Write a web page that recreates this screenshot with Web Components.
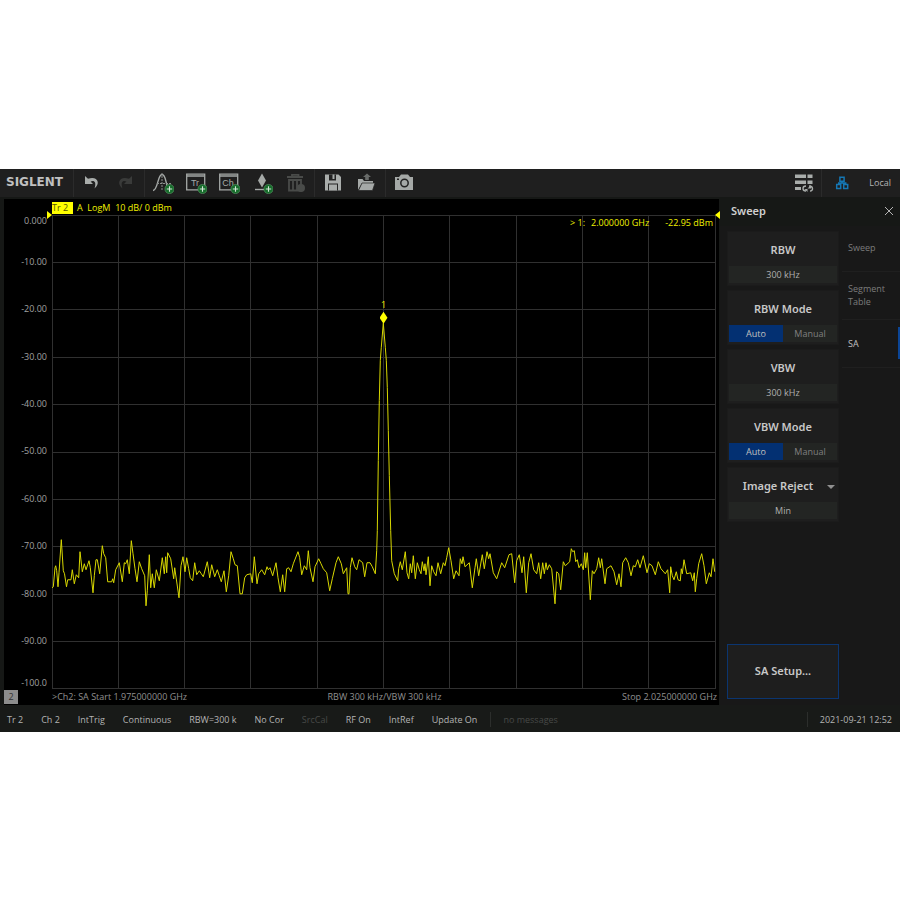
<!DOCTYPE html>
<html lang="en">
<head>
<meta charset="utf-8">
<meta name="viewport" content="width=device-width, initial-scale=1">
<title>Siglent spectrum analyzer</title>
<style>
  body { margin: 0; min-height: 100vh; display: grid; align-items: center; background: #fff; font: 9px/12px "Open Sans", "Noto Sans", sans-serif; color: #b4b4b4; }
</style>
</head>
<body>
<analyzer-app></analyzer-app>
<script>
const BASE = `<style>
  *, *::before, *::after { box-sizing: border-box; }
  button, input, select { font: inherit; color: inherit; margin: 0; border: 0; padding: 0; background: none; border-radius: 0; min-width: 0; }
  button { cursor: pointer; }
</style>`;

function define(name, html, setup) {
  const tpl = document.createElement('template');
  tpl.innerHTML = BASE + html;
  customElements.define(name, class extends HTMLElement {
    connectedCallback() {
      if (this.shadowRoot) return;
      const root = this.attachShadow({ mode: 'open' });
      root.append(tpl.content.cloneNode(true));
      if (setup) setup(this, root);
    }
  });
}

const PLUS = '<circle cx="17.5" cy="17" r="4.6" fill="#176d2c" stroke="#5c9a68" stroke-width=".6"/><path d="M17.5 14.3v5.4M14.8 17h5.4" stroke="#d5e6d8" stroke-width="1.1"/>';
const ICONS = {
  undo: '<path d="M4 4v8h8L9.6 9.6C13 8 15.800 10 13.500 16.500 20 11.500 16.500 3.500 7 6.800z" fill="#a9adab"/>',
  redo: '<path d="M18 4v8h-8l2.400-2.400C9 8 6.200 10 8.500 16.500 2 11.500 5.500 3.500 15 6.800z" fill="#3a3b3a"/>',
  trace: '<path d="M1 18.500C6 18.500 5.500 2.500 10 2.500S13.500 14 17 18" fill="none" stroke="#a5a9a7" stroke-width="1.400"/><path d="M10 1v18M5 11.500h14" stroke="#8c908e" stroke-dasharray="2 1"/>' + PLUS,
  tr: '<path d="M1.700 2.200h18v15.600h-18z" fill="none" stroke="#a5a9a7" stroke-width="1.300"/><path d="M2 4h17" stroke="#a5a9a7" stroke-width="1.500"/><text x="10" y="14" font-size="9" text-anchor="middle" fill="#a5a9a7" font-family="Liberation Sans, sans-serif">Tr</text>' + PLUS,
  ch: '<path d="M1.700 2.200h18v15.600h-18z" fill="none" stroke="#a5a9a7" stroke-width="1.300"/><path d="M2 4h17" stroke="#a5a9a7" stroke-width="1.500"/><text x="10" y="14" font-size="9" text-anchor="middle" fill="#a5a9a7" font-family="Liberation Sans, sans-serif">Ch</text>' + PLUS,
  marker: '<path d="M11 1.500l4 7-4 7-4-7z" fill="#a5a9a7"/><path d="M4 17.500h11" stroke="#a5a9a7" stroke-width="1.400"/>' + PLUS,
  trash: '<path d="M3 5h16M8 5V2.800h6.500V5M5 8h12v10.500H5zM9 8v10M13 8v10" fill="none" stroke="#494b49" stroke-width="1.800"/><circle cx="17" cy="16" r="4" fill="#494b49"/>',
  save: '<path d="M3 2.500h13.500L19 5v13.500H3z" fill="#a9adab"/><path d="M7 2.500h7v6H7z" fill="#222"/><path d="M10.500 2.500h2V7h-2z" fill="#a9adab"/><path d="M6 11.500h10v7H6z" fill="#242524"/><path d="M7 12.500h8v6H7z" fill="#a9adab"/>',
  open: '<path d="M3 18V7h4.500l1.500 2h9v2H7z" fill="#a5a9a7"/><path d="M7 11h13l-2.500 7.500H3.500z" fill="#a5a9a7" stroke="#222" stroke-width=".7"/><path d="M12 1.500l4 3.500h-2.200v3h-3.600V5H8z" fill="#686b69"/>',
  camera: '<path d="M2 5h4l2-2.500h7L17 5h3v13H2z" fill="#a5a9a7"/><circle cx="11.500" cy="11" r="3.700" fill="none" stroke="#222" stroke-width="1.500"/><path d="M4 6.500h2V8H4z" fill="#222"/>',
  layout: '<path d="M1 2.500h11V6H1zM13.500 2.500h5V6h-5zM1 8.500h11V12H1zM13.500 8.500h5V12h-5zM1 15h6v3H1z" fill="#a9adab"/><path d="M12 14c-4 0-4 5 0 5M15 14c4.500 0 4.500 5 1 5" fill="none" stroke="#a9adab" stroke-width="1.400"/><path d="M10.500 17h3v3zM17 13v3.500h-3.500z" fill="#a9adab"/>',
  network: '<path d="M8.900 5.200h4.200v4H8.900zM5.700 12.500h4v4h-4zM12.700 12.500h4v4h-4zM11 9v2M7.700 12.500V11h7v1.500" fill="none" stroke="#1577b4" stroke-width="1.500"/>',
  close: '<path d="M7 7l8 8M15 7l-8 8" stroke="#b4b4b4" stroke-width="1"/>'
};

define('icon-button', `<style>
  :host { display: flex; width: 33px; }
  button { flex: 1; display: grid; place-items: center; }
  svg { width: 22px; height: 22px; display: block; }
</style><button type="button"><svg viewBox="0 0 22 22" aria-hidden="true"></svg></button>`,
(el, root) => {
  root.querySelector('svg').innerHTML = ICONS[el.getAttribute('icon')];
  const b = root.querySelector('button');
  b.setAttribute('aria-label', el.getAttribute('label'));
  b.disabled = el.hasAttribute('disabled');
});

define('tool-group', `<style>
  :host { display: flex; padding: 0 3px 0 1px; border-left: 1px solid #2b2b2b; }
</style><slot></slot>`);

define('tool-bar', `<style>
  :host { display: flex; background: #1f1f1f; }
  .logo { width: 73px; padding-left: 6px; font: bold 12px/27px "DejaVu Sans", sans-serif; color: #c0c0c0; }
  .space { flex: 1; }
  .net { display: flex; align-items: center; border-left: 1px solid #2b2b2b; padding: 0 9px 0 3px; gap: 11px; }
</style>
<div class="logo">SIGLENT</div>
<tool-group><icon-button icon="undo" label="Undo"></icon-button><icon-button icon="redo" label="Redo" disabled></icon-button></tool-group>
<tool-group><icon-button icon="trace" label="Add math trace"></icon-button><icon-button icon="tr" label="Add trace"></icon-button><icon-button icon="ch" label="Add channel"></icon-button><icon-button icon="marker" label="Add marker"></icon-button><icon-button icon="trash" label="Delete" disabled></icon-button></tool-group>
<tool-group><icon-button icon="save" label="Save"></icon-button><icon-button icon="open" label="Open"></icon-button></tool-group>
<tool-group><icon-button icon="camera" label="Screenshot"></icon-button></tool-group>
<span class="space"></span>
<icon-button icon="layout" label="Layout"></icon-button>
<div class="net"><icon-button icon="network" label="Network"></icon-button><span>Local</span></div>`);

define('trace-screen', `<style>
  :host { display: grid; grid-template-rows: 16px 1fr 16px; background: #000; min-width: 0; }
  .head { padding: 2px 0 0 48px; display: flex; align-items: center; gap: 4px; color: #f0f000; white-space: pre; }
  .tag { background: #ff0; color: #555500; width: 21px; line-height: 12px; }
  .mid { display: grid; grid-template-columns: 48px 1fr; padding-right: 4px; }
  .axis { display: grid; grid-template-rows: 1fr repeat(9, 2fr) 1fr; justify-items: end; align-items: center; padding-right: 5px; color: #a0a0a0; }
  .axis :first-child { align-self: start; }
  .axis :last-child { align-self: end; }
  .plot { position: relative; }
  svg.graph { display: block; width: 100%; height: 100%; position: absolute; overflow: visible; }
  path { fill: none; stroke-width: 1; vector-effect: non-scaling-stroke; }
  .grid { stroke: #303030; shape-rendering: crispEdges; }
  .trace { stroke: #d8d800; }
  .ref { position: absolute; top: -4px; border: 4px solid transparent; }
  .ref.l { right: 100%; border-left: 5px solid #ff0; border-right: 0; }
  .ref.r { left: 100%; border-right: 5px solid #ff0; border-left: 0; }
  .readout { position: absolute; top: 2px; right: 2px; color: #f0f000; display: flex; gap: 16px; }
  .readout span:first-child { margin-right: -10px; }
  .mark { position: absolute; left: 50%; top: 21.800%; transform: translate(-50%, -50%); width: 8px; height: 12px; background: #ff0; clip-path: polygon(50% 0, 100% 50%, 50% 100%, 0 50%); }
  .num { position: absolute; left: 50%; top: 19%; transform: translate(-50%, -50%); color: #f0f000; }
  .foot { display: grid; grid-template-columns: 48px 1fr auto 1fr; align-items: center; padding-right: 2px; color: #909090; }
  .foot :last-child { text-align: right; }
  .badge { width: 14px; height: 14px; line-height: 14px; text-align: center; background: #8c8c8c; color: #333; }
</style>
<div class="head"><span class="tag">Tr 2</span><span>A  LogM  10 dB/ 0 dBm</span></div>
<div class="mid">
  <div class="axis"><span>0.000</span><span>-10.00</span><span>-20.00</span><span>-30.00</span><span>-40.00</span><span>-50.00</span><span>-60.00</span><span>-70.00</span><span>-80.00</span><span>-90.00</span><span>-100.0</span></div>
  <div class="plot">
    <svg class="graph" viewBox="52 215 663 473" preserveAspectRatio="none" role="img" aria-label="Spectrum trace"><path class="grid"/><path class="trace"/></svg>
    <i class="ref l"></i><i class="ref r"></i>
    <div class="readout"><span>&gt; 1:</span><span>2.000000 GHz</span><span>-22.95 dBm</span></div>
    <span class="num">1</span><i class="mark"></i>
  </div>
</div>
<div class="foot"><span class="badge">2</span><span>&gt;Ch2: SA Start 1.975000000 GHz</span><span>RBW 300 kHz/VBW 300 kHz</span><span>Stop 2.025000000 GHz</span></div>`,
(el, root) => {
  let g = '';
  for (let i = 0; i <= 10; i++) g += `M${52 + i * 66.3} 215v473M52 ${215 + i * 47.3}h663`;
  root.querySelector('.grid').setAttribute('d', g);
  root.querySelector('.trace').setAttribute('d', 'M' + TRACE.trim());
});

const TRACE = `
52,587 53.3,586 55,567 55.7,565 56.7,570 58,586 59,572 61.3,539 63.3,570 64.5,573 66.5,586 67.7,579 71,579 72.3,569 74.3,583 76.3,574 78.7,577 80,551 82.3,571 84.3,563 86,569 89,560 90.3,567 93,592 94.3,575 96,559 97.3,559 99.7,573 102.3,545 103.7,553 105.7,557 107.7,581 111.7,581 112.7,578 113.7,582 115.7,569 119.3,562 122.3,581 124.3,562 125.7,563 127.3,559 129.3,573 131.3,540 133,553 135,568 137,581 139.3,561 141.7,568 144.7,575 146,605 147.3,590 149.3,554 150.7,587 152.3,573 154.3,587 156.3,569 159.3,580 162.3,557 164.3,573 165.7,556 166.7,572 167.7,552 170.7,558 173.7,578 174.7,567 179,597 181,565 183,556 185,571 186.7,557 188.7,568 190.3,577 192.7,580 194.7,562 196.7,574 199.3,570 201.3,573 203.3,576 207.3,561 209.7,577 211.7,564 214.7,576 217.3,569 219.3,575 221.3,581 224,570 226.3,591 228.7,575 231,551 233.3,558 235,564 237.3,565 240,593 242.3,593 244.7,577 246.7,574 250.7,573 252.3,582 254.3,556 257,583 258.7,573 261.7,569 264.7,574 267,566 268.3,569 270,567 272.7,575 276,562 278,577 280.3,591 282.7,574 284.7,591 286.7,568 288.7,567 291,571 293.3,563 298,551 299.7,557 301.7,574 304.3,565 306.7,569 308.3,550 310,567 313,581 315,566 318.7,558 321,563 323.3,568 326.7,572 329.7,590 332.3,578 336,562 338.3,556 341.3,563 343.3,573 346.7,567 348,593 349,593 350.3,567 352,557 354.7,566 356.7,569 359,559 362.7,562 364.7,576 367,562 370,562 372.3,566 375.3,573 376.7,550 377.3,530 378.3,460 379.3,400 380.3,360 381.3,347 383.3,323 385.3,347 386.3,360 387.3,387 388.3,430 389.3,475 390.7,530 391.7,560 394.3,573 397.7,580 398.7,568 400.3,561 402.3,569 405.3,551 407,572 408.7,578 410.3,563 411.7,572 413.3,555 415.3,578 417.3,562 419.3,569 421,573 422.3,561 424,570 425,563 426,574 428.3,556 430,585 431.7,565 433.7,571 436,575 438,562 440.7,573 443.3,562 445,565 446.7,557 448.7,547 451,560 453.7,578 456,570 459,575 460.3,558 462,563 463,556 465,566 469.3,562 472.3,587 475,567 476.3,558 478.7,575 482.3,554 484.3,568 487,551 488.7,558 490,553 493.3,572 496.7,578 501.7,562 504.7,567 509,554 511.7,553 514.7,582 516.7,560 519.3,554 522,572 523.7,556 526.3,592 528.7,562 531,553 533.7,569 536.7,573 538.7,562 540.7,578 542.7,562 544.3,573 546,562 547.3,569 549.3,564 551.7,568 555,603 556.7,571 558.7,573 560.7,589 563.3,561 565.3,565 569.7,561 571.3,548 572.7,551 574.3,550 575.7,561 577.3,559 579,567 581.3,563 583.3,569 584.7,552 585.7,567 587.3,552 590.3,599 592.3,570 594,573 596.7,568 598.7,557 600.3,567 601.7,558 605,583 606.7,568 611,565 614,571 616.7,584 619,573 621,586 622.7,562 625.7,557 628.3,562 631,575 633.3,565 635.3,566 637.7,559 640,567 643.3,555 647,572 649.3,563 652,565 655.3,574 658.3,561 661,568 665.3,573 667.7,569 669.7,592 670.7,566 672.3,575 674,579 676.3,571 678,579 680.3,580 681.3,568 682.3,573 684,559 686.7,573 690.7,572 692.7,580 694.3,572 695.3,591 696.7,578 698.7,563 701.7,553 704,565 706.3,583 709.3,572 711,576 713,558 714.7,571`;

const CARD = `
  :host { display: grid; grid-template-rows: 1fr 17px; height: 55px; padding: 1px 1px 2px; background: #1e1e1e; border: 1px solid #1b1b1b; }
  .title { position: relative; display: grid; place-items: center; padding-top: 1px; font: 600 11px/16px "Noto Sans", sans-serif; color: #c8c8c8; }
  .value { width: 100%; background: #232523; text-align: center; color: #b0b0b0; padding-top: 2px; }`;

define('value-card', `<style>${CARD}</style><label class="title" for="v"></label><input class="value" id="v" type="text">`,
(el, root) => {
  root.querySelector('label').textContent = el.getAttribute('label');
  root.querySelector('input').value = el.getAttribute('value');
});

define('mode-card', `<style>${CARD}
  .seg { display: grid; grid-template-columns: 1fr 1fr; background: #232523; }
  .seg label { display: grid; place-items: center; padding-top: 2px; color: #808080; cursor: pointer; }
  .seg label:has(:checked) { background: #033072; color: #c0c0c0; }
  .seg input { appearance: none; position: absolute; }
</style><span class="title" id="t"></span>
<div class="seg" role="radiogroup" aria-labelledby="t"><label><input type="radio" name="m" checked><span>Auto</span></label><label><input type="radio" name="m"><span>Manual</span></label></div>`,
(el, root) => { root.querySelector('.title').textContent = el.getAttribute('label'); });

define('select-card', `<style>${CARD}
  .title { padding-right: 10px; }
  .title::after { content: ""; position: absolute; right: 2px; top: 50%; border: 4px solid transparent; border-top-color: #909090; border-bottom: 0; }
  select { appearance: none; text-align-last: center; }
</style><label class="title" for="s"></label><select class="value" id="s"><option>Min</option></select>`,
(el, root) => {
  root.querySelector('label').textContent = el.getAttribute('label');
});

define('panel-tab', `<style>
  :host { display: grid; height: 48px; border-bottom: 1px solid #1f1f1f; }
  :host([first]) { height: 40px; }
  button { text-align: left; padding: 0 8px 0 6px; line-height: 13px; color: #7c7c7c; border-right: 2px solid transparent; height: 32px; align-self: center; }
  :host([first]) button { align-self: start; }
  :host([active]) button { color: #c0c0c0; border-color: #0b4596; }
</style><button type="button"><slot></slot></button>`);

define('sweep-panel', `<style>
  :host { display: grid; grid-template-rows: 29px 1fr; background: #181818; }
  header { display: flex; align-items: center; justify-content: space-between; padding-left: 11px; background: #161816; }
  h2 { margin: 0; font: 600 11px/16px "Noto Sans", sans-serif; color: #d0d0d0; }
  header icon-button { width: 22px; height: 22px; }
  .body { display: grid; grid-template-columns: 112px 1fr; gap: 3px; padding: 5px 0 6px 7px; }
  .cards { display: flex; flex-direction: column; gap: 4px; }
  nav { padding-top: 1px; }
  .setup { margin-top: auto; height: 55px; border: 1px solid #0b3570; background: #1e1e1e; font: 600 11px/16px "Noto Sans", sans-serif; color: #c8c8c8; }
</style>
<header><h2>Sweep</h2><icon-button icon="close" label="Close"></icon-button></header>
<div class="body">
  <div class="cards">
    <value-card label="RBW" value="300 kHz"></value-card>
    <mode-card label="RBW Mode"></mode-card>
    <value-card label="VBW" value="300 kHz"></value-card>
    <mode-card label="VBW Mode"></mode-card>
    <select-card label="Image Reject"></select-card>
    <button class="setup" type="button">SA Setup...</button>
  </div>
  <nav aria-label="Sweep pages"><panel-tab first>Sweep</panel-tab><panel-tab>Segment Table</panel-tab><panel-tab active>SA</panel-tab></nav>
</div>`);

define('status-bar', `<style>
  :host { display: flex; align-items: center; gap: 18px; padding: 2px 8px 0 7px; background: #181a18; white-space: nowrap; line-height: 15px; }
  .off { color: #474947; }
  .msg { border-left: 1px solid #2c2e2c; padding-left: 12px; margin-left: -5px; }
  time { margin-left: auto; border-left: 1px solid #2c2e2c; padding-left: 12px; }
</style>
<span>Tr 2</span><span>Ch 2</span><span>IntTrig</span><span>Continuous</span><span>RBW=300 k</span><span>No Cor</span><span class="off">SrcCal</span><span>RF On</span><span>IntRef</span><span>Update On</span><span class="off msg">no messages</span><time datetime="2021-09-21T12:52">2021-09-21 12:52</time>`);

define('analyzer-app', `<style>
  :host { display: grid; grid-template-rows: 28px 1fr 27px; aspect-ratio: 900 / 563; background: #161816; }
  main { display: grid; grid-template-columns: 1fr 180px; }
  trace-screen { margin: 2px 1px 0 4px; }
</style>
<tool-bar></tool-bar>
<main><trace-screen></trace-screen><sweep-panel></sweep-panel></main>
<status-bar></status-bar>`);
</script>
</body>
</html>
